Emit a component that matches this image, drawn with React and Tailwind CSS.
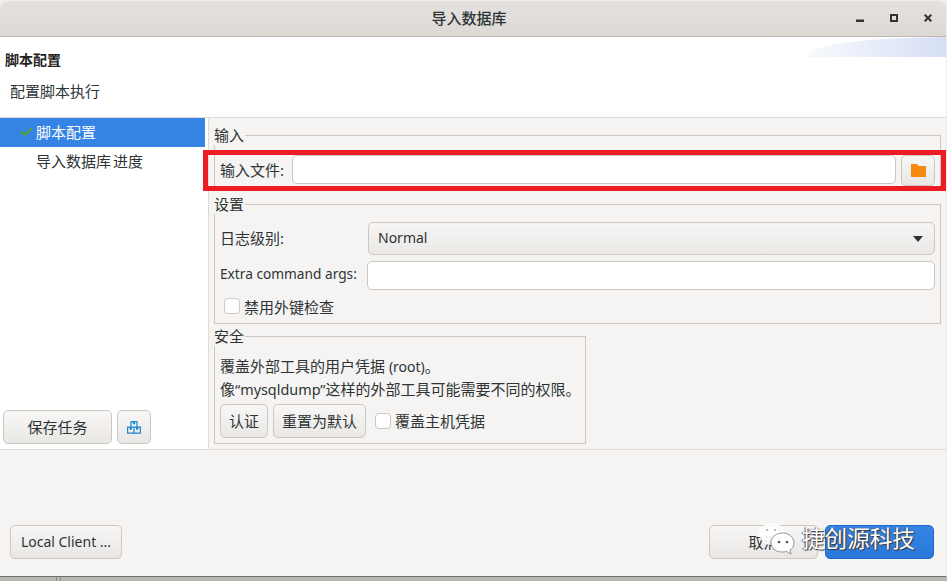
const F = { fontFamily: '"Noto Sans","Noto Sans CJK SC",sans-serif' };

function Btn({ className = "", size = "text-[15px]", children }) {
  return (
    <button className={`flex items-center justify-center rounded-[5px] border border-[#cdc7c2] bg-gradient-to-b from-[#f8f7f6] to-[#e9e7e4] text-[#2e3436] ${size} ${className}`}>
      {children}
    </button>
  );
}

function Group({ title, className = "", children }) {
  return (
    <div className={`relative border border-[#cdc7c2] ${className}`}>
      <span className="absolute left-[-1px] top-[-11px] bg-[#f5f4f2] pr-[1px] text-[15px] leading-[20px] text-[#2e3436]">{title}</span>
      {children}
    </div>
  );
}

function Check() {
  return <span className="block h-[16px] w-[16px] shrink-0 rounded-[4px] border border-[#cdc7c2] bg-white" />;
}

export default function App() {
  return (
    <div style={F} className="relative h-[581px] w-[947px] overflow-hidden bg-[#eeeeec]">
      <div className="absolute bottom-0 left-0 flex h-[5px] w-full bg-[#b6b6b3] pl-[56px]">
        <span className="h-full w-[5px] border-x border-[#8f8f8c]" />
      </div>
      <div className="relative mt-[1px] flex h-[576px] w-[946px] flex-col overflow-hidden rounded-t-[8px] border-b border-[#6f6f6c] bg-[#f5f4f2] text-[#2e3436]">
        <div className="relative flex h-[36px] shrink-0 items-center justify-center border-b border-[#bfb8b1] bg-gradient-to-b from-[#e4e1de] to-[#dcd9d5] pr-[8px]">
          <span className="text-[15px] font-medium text-[#2e3436]">导入数据库</span>
          <div className="absolute left-[856px] top-[13px] flex items-start gap-[26px]">
            <svg width="8" height="8" viewBox="0 0 8 8"><rect x="0" y="5.500" width="8" height="2.500" fill="#2e3436" /></svg>
            <svg width="8" height="8" viewBox="0 0 8 8"><rect x="1" y="1" width="6" height="6" fill="none" stroke="#2e3436" strokeWidth="2" /></svg>
            <svg width="8" height="8" viewBox="0 0 8 8"><path d="M.7.7l6.600 6.600M7.300.7L.7 7.300" stroke="#2e3436" strokeWidth="2" /></svg>
          </div>
        </div>

        <div className="relative h-[81px] shrink-0 overflow-hidden border-b border-[#dedbd8] bg-white">
          <div className="absolute right-0 top-0 h-[20px] w-[141px] overflow-hidden">
            <div className="absolute left-0 top-0 h-[40px] w-[282px] rounded-[50%] bg-gradient-to-r from-[#f9fafd] to-[#d5dff5] bg-[length:141px_100%] bg-no-repeat" />
          </div>
          <div className="pl-[5px] pt-[14px] text-[14px] font-bold leading-[18px] text-[#1f2324]">脚本配置</div>
          <div className="pl-[10px] pt-[12px] text-[15px] leading-[20px] text-[#2e3436]">配置脚本执行</div>
        </div>

        <div className="flex h-[332px] shrink-0 border-b border-[#dedbd8]">
          <div className="flex w-[209px] shrink-0 flex-col border-r border-[#dedbd8] bg-white">
            <div className="flex h-[29px] w-[205px] items-center bg-[#3584e4] pl-[20px] text-[15px] text-white">
              <svg width="13" height="10" viewBox="0 0 13 10" className="mb-[1px]"><path d="M1 4.500l3.500 3L11.500 1.500" fill="none" stroke="#4ea24a" strokeWidth="2.800" /></svg>
              <span className="ml-[3px]">脚本配置</span>
            </div>
            <div className="flex h-[29px] items-center pl-[36px] text-[15px] [word-spacing:-2px]">导入数据库 进度</div>
            <div className="mt-auto flex gap-[5px] pb-[5px] pl-[3px]">
              <Btn className="h-[34px] w-[109px]">保存任务</Btn>
              <Btn className="h-[34px] w-[34px]">
                <svg width="14" height="13" viewBox="0 0 14 13" fill="none" stroke="#1c86d0" strokeWidth="1.200"><path d="M4 .6h6v5.500H4zM.6 6.100h6.400v6H.6zM7 6.100h6.400v6H7zM6.500 .6v2h1v-2M3.300 6.100v2h1v-2M9.700 6.100v2h1v-2" /></svg>
              </Btn>
            </div>
          </div>
          <div className="flex-1 pl-[5px] pt-[17px]">
            <Group title="输入" className="h-[56px] w-[727px]">
              <div className="flex items-start pl-[5px] pt-[19px]">
                <span className="mt-[5px] w-[72px] text-[15px] leading-[20px]">输入文件:</span>
                <div className="h-[29px] w-[604px] rounded-[5px] border border-[#cdc7c2] bg-white" />
                <Btn className="ml-[5px] h-[31px] w-[34px]">
                  <svg width="15" height="13" viewBox="0 0 15 13"><path d="M0 0h6l1.500 2H15v11H0z" fill="#f58a0f" /></svg>
                </Btn>
              </div>
            </Group>
            <Group title="设置" className="mt-[13px] h-[120px] w-[727px]">
              <div className="flex items-center pl-[5px] pt-[17px]">
                <span className="mb-[2px] w-[147px] text-[15px] leading-[20px]">日志级别:</span>
                <div className="ml-[1px] flex h-[33px] w-[567px] items-center justify-between rounded-[5px] border border-[#cdc7c2] bg-gradient-to-b from-[#f6f5f4] to-[#ebe9e6] pb-[2px] pl-[9px] pr-[11px] text-[14px]">
                  <span>Normal</span>
                  <span className="mt-[2px] h-0 w-0 border-x-[5.500px] border-t-[6px] border-x-transparent border-t-[#2e3436]" />
                </div>
              </div>
              <div className="mt-[6px] flex items-center pl-[5px]">
                <span className="mb-[3px] w-[147px] whitespace-nowrap text-[13.700px] leading-[20px]">Extra command args:</span>
                <div className="h-[29px] w-[568px] rounded-[5px] border border-[#cdc7c2] bg-white" />
              </div>
              <div className="mt-[8px] flex items-start gap-[4px] pl-[9px] text-[15px] leading-[18px]"><Check /><span>禁用外键检查</span></div>
            </Group>
            <Group title="安全" className="mt-[12px] h-[108px] w-[372px]">
              <div className="whitespace-nowrap pl-[5px] pt-[18px] text-[15px] leading-[23px]">
                <div>覆盖外部工具的用户凭据 <span className="text-[14px]">(root)</span>。</div>
                <div>像<span className="text-[14.400px]">“mysqldump”</span>这样的外部工具可能需要不同的权限。</div>
              </div>
              <div className="mt-[3px] flex items-center pl-[5px]">
                <Btn className="h-[34px] w-[48px]">认证</Btn>
                <Btn className="ml-[5px] h-[34px] w-[93px]">重置为默认</Btn>
                <span className="ml-[9px]"><Check /></span>
                <span className="ml-[4px] text-[15px] leading-[20px]">覆盖主机凭据</span>
              </div>
            </Group>
          </div>
        </div>

        <div className="flex flex-1 items-end justify-between pb-[17px] pl-[10px] pr-[12px]">
          <Btn size="text-[14px]" className="h-[34px] w-[112px] pb-[1px]">Local Client ...</Btn>
          <div className="flex gap-[7px]">
            <Btn className="h-[34px] w-[109px]">取消</Btn>
            <button className="h-[34px] w-[109px] rounded-[5px] border border-[#1b6acb] bg-gradient-to-b from-[#3584e4] to-[#2a78dc]" />
          </div>
        </div>
      </div>

      <div className="absolute left-[203px] top-[150px] h-[41px] w-[743px] border-[5px] border-[#ed1c24]" />

      <div className="absolute left-[758px] top-[521px] flex items-center">
        <svg width="40" height="36" viewBox="0 0 40 36">
          <ellipse cx="14" cy="13" rx="13" ry="11" fill="#fff" opacity=".85" />
          <path d="M25 12c6 0 11 4.500 11 10 0 3-1.500 5.500-4 7l1 4-4.500-2.500c-1.500.4-3 .5-4.500.5-6.500 0-11-4-11-9.500S18.500 12 25 12z" fill="#fff" stroke="#555" strokeWidth=".6" />
          <circle cx="21" cy="21" r="1.300" fill="#555" /><circle cx="29" cy="21" r="1.300" fill="#555" />
          <circle cx="9" cy="9" r="1.200" fill="#bbb" /><circle cx="17" cy="9" r="1.200" fill="#bbb" />
        </svg>
        <span className="ml-[4px] text-[22.600px] leading-[34px] text-white [text-shadow:1px_1px_1px_#333,-1px_0_1px_#555]">捷创源科技</span>
      </div>
    </div>
  );
}
